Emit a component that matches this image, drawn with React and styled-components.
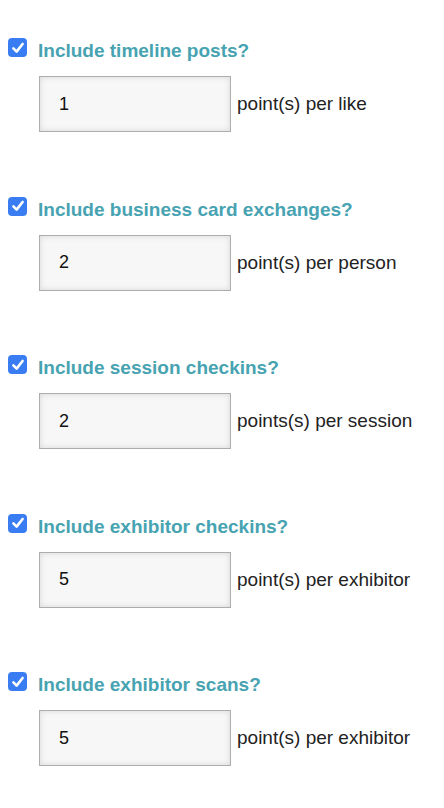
import React from "react";
import styled, { createGlobalStyle } from "styled-components";

const Global = createGlobalStyle`
  html, body { margin: 0; padding: 0; background: #fff; }
  body { font-family: "Liberation Sans", Arial, Helvetica, sans-serif; }
`;

const Page = styled.div`
  padding-top: 38px;
  display: flex;
  flex-direction: column;
`;

const Section = styled.section`
  height: 158.5px;
  display: flex;
  flex-direction: column;
`;

const Header = styled.label`
  display: flex;
  align-items: flex-start;
  gap: 11px;
  padding-left: 8px;
`;

const Box = styled.span`
  width: 19px;
  height: 19px;
  flex: 0 0 19px;
  border-radius: 4px;
  background: #3a7df2;
  display: flex;
  align-items: center;
  justify-content: center;
`;

const Title = styled.span`
  margin-top: 1px;
  font-size: 19px;
  line-height: 23px;
  font-weight: 700;
  color: #47a3b1;
`;

const Row = styled.div`
  margin-top: 14px;
  padding-left: 39px;
  display: flex;
  align-items: center;
  gap: 6px;
`;

const Input = styled.input`
  box-sizing: border-box;
  width: 192px;
  height: 56px;
  border: 1px solid #adadad;
  background: #f7f7f7;
  box-shadow: inset 0 0 6px rgba(0, 0, 0, 0.13);
  padding: 0 0 0 19px;
  font-family: "Liberation Sans", Arial, sans-serif;
  font-size: 18px;
  color: #111;
  outline: none;
  margin: 0;
`;

const Unit = styled.span`
  font-size: 19px;
  color: #222;
`;

const Check = () => (
  <svg width="14" height="14" viewBox="0 0 14 14">
    <path d="M2.4 7.4 L5.6 10.6 L11.6 3" fill="none" stroke="#fff" strokeWidth="2.6" strokeLinecap="round" strokeLinejoin="round" />
  </svg>
);

const items = [
  { title: "Include timeline posts?", value: "1", unit: "point(s) per like" },
  { title: "Include business card exchanges?", value: "2", unit: "point(s) per person" },
  { title: "Include session checkins?", value: "2", unit: "points(s) per session" },
  { title: "Include exhibitor checkins?", value: "5", unit: "point(s) per exhibitor" },
  { title: "Include exhibitor scans?", value: "5", unit: "point(s) per exhibitor" },
];

export default function App() {
  return (
    <>
      <Global />
      <Page>
        {items.map((it) => (
          <Section key={it.title}>
            <Header>
              <Box><Check /></Box>
              <Title>{it.title}</Title>
            </Header>
            <Row>
              <Input defaultValue={it.value} />
              <Unit>{it.unit}</Unit>
            </Row>
          </Section>
        ))}
      </Page>
    </>
  );
}
